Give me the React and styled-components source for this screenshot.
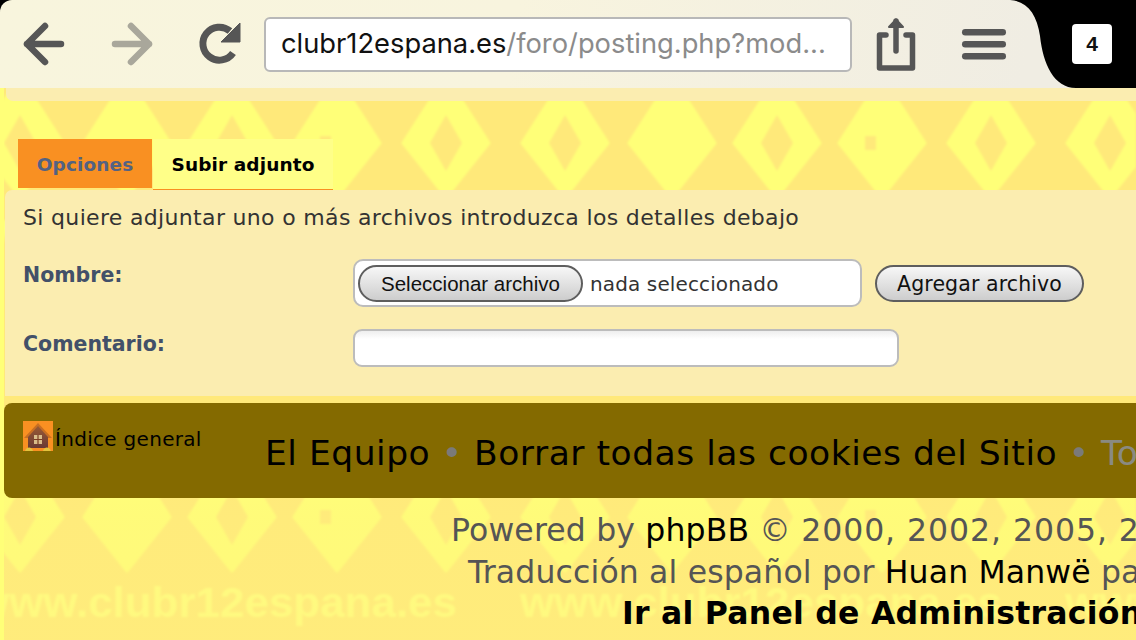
import React from "react";
import styled, { createGlobalStyle } from "styled-components";

const Global = createGlobalStyle`
  html, body { margin: 0; padding: 0; background: #ffe97a; }
  * { box-sizing: border-box; }
`;

const Page = styled.div`
  position: relative;
  width: 1136px;
  height: 640px;
  overflow: hidden;
  font-family: "DejaVu Sans", Verdana, sans-serif;
  color: #333;
`;

const Backdrop = styled.svg`
  position: absolute;
  inset: 0;
  width: 1136px;
  height: 640px;
`;

const Content = styled.div`
  position: relative;
  display: flex;
  flex-direction: column;
`;

const ToolbarFrame = styled.header`
  background: #000;
  height: 88px;
`;

const ToolbarBody = styled.div`
  display: flex;
  align-items: center;
  height: 88px;
  padding-left: 20px;
  border-radius: 12px 0 0 0;
  background: linear-gradient(100deg, #f8f5dd 0%, #f8f4de 45%, #f0ede3 90%);
`;

const NavIcon = styled.svg`
  flex: none;
  width: 48px;
  height: 48px;
  margin-right: ${(p) => p.$gap}px;
`;

const UrlBox = styled.div`
  flex: none;
  display: flex;
  align-items: center;
  width: 588px;
  height: 55px;
  padding-left: 15px;
  border: 2px solid #b8b8b8;
  border-radius: 6px;
  background: #fff;
  font: 400 27.3px/1 Inter, sans-serif;
  white-space: nowrap;
  color: #111;
`;

const UrlRest = styled.span`
  color: #8b8b8b;
`;

const ShareIcon = styled.svg`
  flex: none;
  width: 42px;
  height: 56px;
  margin-left: 23px;
`;

const MenuIcon = styled.svg`
  flex: none;
  width: 46px;
  height: 36px;
  margin-left: 44px;
`;

const TabCap = styled.div`
  position: relative;
  flex: none;
  width: 126px;
  height: 88px;
  margin-left: auto;
`;

const CapShape = styled.svg`
  position: absolute;
  inset: 0;
  width: 126px;
  height: 88px;
`;

const TabCount = styled.div`
  position: absolute;
  left: 62px;
  top: 24px;
  width: 40px;
  height: 40px;
  display: flex;
  align-items: center;
  justify-content: center;
  border-radius: 4px;
  background: #fff;
  color: #111;
  font: 700 21px "Liberation Sans", sans-serif;
`;

const TopStrip = styled.div`
  height: 13px;
  margin-left: 6px;
  background: #fbedb0;
  border-radius: 0 0 0 7px;
`;

const TabRow = styled.nav`
  display: flex;
  align-items: flex-start;
  height: 51px;
  margin-top: 38px;
  padding-left: 18px;
`;

const Tab = styled.div`
  display: flex;
  align-items: center;
  justify-content: center;
  height: ${(p) => (p.$active ? 51 : 49)}px;
  width: ${(p) => (p.$active ? 180 : 134)}px;
  margin-right: 1px;
  padding-top: ${(p) => (p.$active ? 0 : 2)}px;
  background: ${(p) => (p.$active ? "#ffff88" : "#f99022")};
  border-bottom: ${(p) => (p.$active ? "1px solid #f99022" : "none")};
  color: ${(p) => (p.$active ? "#000" : "#536282")};
  font-size: 18.5px;
  letter-spacing: 0.1px;
  font-weight: 700;
`;

const Panel = styled.section`
  height: 206px;
  margin-left: 5px;
  padding: 15px 0 0 18px;
  background: #fbedb0;
  border-radius: 7px 0 0 0;
`;

const Intro = styled.div`
  font-size: 22px;
  letter-spacing: 0.33px;
  line-height: 25px;
  color: #333;
  white-space: nowrap;
`;

const FormRow = styled.div`
  display: flex;
  align-items: flex-start;
  margin-top: ${(p) => p.$top}px;
`;

const Label = styled.label`
  flex: none;
  width: 330px;
  padding-top: ${(p) => p.$pad}px;
  font-size: 20.5px;
  line-height: 24px;
  font-weight: 700;
  color: #425069;
`;

const FileBox = styled.div`
  flex: none;
  display: flex;
  align-items: center;
  width: 509px;
  height: 48px;
  padding-left: 3px;
  border: 2px solid #bcbcbc;
  border-radius: 10px;
  background: #fff;
  font-size: 20px;
  letter-spacing: 0.12px;
  color: #333;
`;

const PillButton = styled.button`
  flex: none;
  display: flex;
  align-items: center;
  justify-content: center;
  height: 37px;
  width: ${(p) => p.$width}px;
  padding: 1px 0 0;
  border: 2px solid #5e5e5e;
  border-radius: 19px;
  background: linear-gradient(#f7f7f7, #cdcdcd);
  color: #111;
  font-family: ${(p) => (p.$system ? '"Liberation Sans", sans-serif' : '"DejaVu Sans", sans-serif')};
  font-size: 20.5px;
  letter-spacing: ${(p) => (p.$system ? 0 : 0.1)}px;
`;

const FileState = styled.span`
  margin-left: 7px;
  padding-top: 1px;
`;

const AddButtonSlot = styled.div`
  flex: none;
  margin: 6px 0 0 13px;
`;

const CommentInput = styled.div`
  flex: none;
  width: 546px;
  height: 38px;
  border: 2px solid #bcbcbc;
  border-radius: 9px;
  background: linear-gradient(#eeeeee, #ffffff 8px);
`;

const FooterBar = styled.div`
  display: flex;
  align-items: flex-start;
  height: 95px;
  margin: 7px 0 0 4px;
  padding: 18px 0 0 19px;
  background: #846a00;
  border-radius: 8px 0 0 8px;
  white-space: nowrap;
  overflow: hidden;
  color: #000;
`;

const HomeIcon = styled.svg`
  flex: none;
  width: 30px;
  height: 30px;
`;

const HomeLink = styled.span`
  flex: none;
  width: 210px;
  margin-left: 2px;
  padding-top: 4px;
  font-size: 20px;
  letter-spacing: 0.3px;
  line-height: 28px;
`;

const BarLinks = styled.div`
  flex: none;
  padding-top: 12px;
  font-size: 34.5px;
  letter-spacing: 0.52px;
  line-height: 40px;
`;

const Bullet = styled.span`
  color: #7a7a7a;
`;

const Muted = styled.span`
  color: #8a8a82;
`;

const FooterLines = styled.footer`
  margin-top: 11px;
`;

const FooterLine = styled.div`
  height: 41.5px;
  padding-left: ${(p) => p.$indent}px;
  font-size: 31.5px;
  letter-spacing: ${(p) => (p.$strong ? 0.25 : 0.15)}px;
  line-height: 42px;
  font-weight: ${(p) => (p.$strong ? 700 : 400)};
  color: ${(p) => (p.$strong ? "#000" : "#555")};
  white-space: nowrap;
`;

const FooterLink = styled.span`
  color: #000;
`;

const Years = styled.span`
  letter-spacing: 0.95px;
`;

const diamonds = [
  { x: 50, hole: true },
  { x: 157 },
  { x: 262, hole: true },
  { x: 367, mark: true },
  { x: 476, hole: true },
];

function Wallpaper() {
  return (
    <Backdrop viewBox="0 0 1136 640">
      <defs>
        <filter id="soft">
          <feGaussianBlur stdDeviation="0.8" />
        </filter>
        <pattern id="tile" width="545" height="374" patternUnits="userSpaceOnUse" patternTransform="translate(-30 0)">
          {diamonds.map((d) => (
            <g key={d.x} transform={`translate(${d.x} 143)`}>
              <polygon points="-9,-53 9,-53 43,0 0,54 -43,0" fill="#ffff78" stroke="#ffff78" strokeWidth="3" strokeLinejoin="round" />
              {d.hole && <polygon points="0,-28 16,0 0,28 -16,0" fill="#ffe97a" />}
              {d.mark && <rect x="-17" y="-7" width="11" height="14" fill="#ffe97a" />}
            </g>
          ))}
          <text
            x="5"
            y="243"
            textLength="482"
            lengthAdjust="spacingAndGlyphs"
            fontFamily="Liberation Sans, sans-serif"
            fontWeight="700"
            fontSize="42"
            fill="#ffff80"
          >
            www.clubr12espana.es
          </text>
        </pattern>
        <linearGradient id="veil" x1="0" y1="0" x2="0" y2="1">
          <stop offset="0.7" stopColor="#fff07e" stopOpacity="0" />
          <stop offset="0.82" stopColor="#fff07e" stopOpacity="0.3" />
          <stop offset="1" stopColor="#fff07e" stopOpacity="0.4" />
        </linearGradient>
      </defs>
      <rect width="1136" height="640" fill="#ffe97a" />
      <rect width="1136" height="640" fill="url(#tile)" filter="url(#soft)" />
      <rect width="1136" height="640" fill="url(#veil)" />
      <rect width="4" height="640" fill="#ffff78" />
    </Backdrop>
  );
}

export default function App() {
  return (
    <Page>
      <Global />
      <Wallpaper />
      <Content>
        <ToolbarFrame>
          <ToolbarBody>
            <NavIcon $gap={40} viewBox="0 0 48 48" fill="none" stroke="#565656" strokeWidth="6.5" strokeLinecap="round" strokeLinejoin="round">
              <path d="M7 24H41M25 6L7 24L25 42" />
            </NavIcon>
            <NavIcon $gap={41} viewBox="0 0 48 48" fill="none" stroke="#a9a79b" strokeWidth="6.5" strokeLinecap="round" strokeLinejoin="round">
              <path d="M7 24H41M23 6L41 24L23 42" />
            </NavIcon>
            <NavIcon $gap={19} viewBox="0 0 48 48">
              <path d="M36 33A16.5 16.5 0 1 1 33 11" fill="none" stroke="#565656" strokeWidth="7" />
              <path d="M43 3V22H24Z" fill="#565656" stroke="#565656" strokeWidth="1" strokeLinejoin="round" />
            </NavIcon>
            <UrlBox>
              clubr12espana.es<UrlRest>/foro/posting.php?mod...</UrlRest>
            </UrlBox>
            <ShareIcon viewBox="0 0 42 56" fill="none" stroke="#565656" strokeWidth="5.5" strokeLinecap="round" strokeLinejoin="round">
              <path d="M11 19H4.5V52H37.5V19H31" />
              <path d="M21 35V5" />
              <path d="M14 11L21 3.5L28 11Z" fill="#565656" strokeWidth="2" />
            </ShareIcon>
            <MenuIcon viewBox="0 0 46 36" fill="#565656">
              <rect x="1" y="3" width="44" height="6.5" rx="3.2" />
              <rect x="1" y="15" width="44" height="6.5" rx="3.2" />
              <rect x="1" y="27" width="44" height="6.5" rx="3.2" />
            </MenuIcon>
            <TabCap>
              <CapShape viewBox="0 0 126 88">
                <path d="M0 0C17 1 27 14 30 36C33 64 44 88 66 88H126V0Z" fill="#000" />
              </CapShape>
              <TabCount>4</TabCount>
            </TabCap>
          </ToolbarBody>
        </ToolbarFrame>
        <TopStrip />
        <TabRow>
          <Tab>Opciones</Tab>
          <Tab $active>Subir adjunto</Tab>
        </TabRow>
        <Panel>
          <Intro>Si quiere adjuntar uno o más archivos introduzca los detalles debajo</Intro>
          <FormRow $top={29}>
            <Label $pad={4}>Nombre:</Label>
            <FileBox>
              <PillButton $system $width={225}>Seleccionar archivo</PillButton>
              <FileState>nada seleccionado</FileState>
            </FileBox>
            <AddButtonSlot>
              <PillButton $width={209}>Agregar archivo</PillButton>
            </AddButtonSlot>
          </FormRow>
          <FormRow $top={22}>
            <Label $pad={3}>Comentario:</Label>
            <CommentInput />
          </FormRow>
        </Panel>
        <FooterBar>
          <HomeIcon viewBox="0 0 30 30">
            <defs>
              <linearGradient id="houseBody" x1="0" y1="0" x2="0" y2="1">
                <stop offset="0" stopColor="#9a5a34" />
                <stop offset="1" stopColor="#6a3a34" />
              </linearGradient>
            </defs>
            <rect width="30" height="30" fill="#f99022" />
            <path d="M15 2L29 17L25 17V27H5V17H1Z" fill="#c96f22" />
            <path d="M15 5L25 16V27H5V16Z" fill="url(#houseBody)" />
            <rect x="11" y="14" width="8" height="9" fill="#d9bd8a" />
            <path d="M15 14V23M11 18.5H19" stroke="#7c3d24" strokeWidth="1.2" />
            <path d="M2 30C4 25 9 26 10 30ZM20 30C21 26 26 25 28 30Z" fill="#e4c23c" />
          </HomeIcon>
          <HomeLink>Índice general</HomeLink>
          <BarLinks>
            El Equipo <Bullet>•</Bullet> Borrar todas las cookies del Sitio <Bullet>•</Bullet> <Muted>Todos los horarios</Muted>
          </BarLinks>
        </FooterBar>
        <FooterLines>
          <FooterLine $indent={451}>
            Powered by <FooterLink>phpBB</FooterLink> © <Years>2000, 2002, 2005, 2007</Years> phpBB Group
          </FooterLine>
          <FooterLine $indent={468}>
            Traducción al español por <FooterLink>Huan Manwë</FooterLink> para phpbb-es.com
          </FooterLine>
          <FooterLine $indent={622} $strong>Ir al Panel de Administración</FooterLine>
        </FooterLines>
      </Content>
    </Page>
  );
}
